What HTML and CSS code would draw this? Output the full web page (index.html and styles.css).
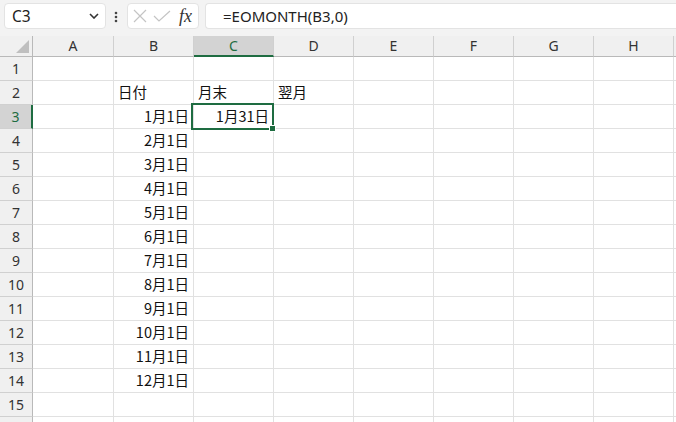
FILE: index.html
```html
<!doctype html>
<html lang="ja">
<head>
<meta charset="UTF-8">
<title>EOMONTH</title>
<link rel="stylesheet" href="styles.css">
</head>
<body>
	<div class="toolbar">
		<div class="namebox">
			<span class="name">C3</span>
			<svg class="chev" width="10" height="6" viewBox="0 0 10 6"><path d="M1 1 L5 5 L9 1" fill="none" stroke="#333" stroke-width="1.6"/></svg>
		</div>
		<svg class="dots" width="4" height="12" viewBox="0 0 4 12"><circle cx="2" cy="2" r="1.3" fill="#444"/><circle cx="2" cy="6" r="1.3" fill="#444"/><circle cx="2" cy="10" r="1.3" fill="#444"/></svg>
		<div class="btnbox">
			<svg width="14" height="14" viewBox="0 0 14 14"><path d="M1 1 L13 13 M13 1 L1 13" stroke="#c4c4c4" stroke-width="1.2"/></svg>
			<svg width="18" height="12" viewBox="0 0 18 12"><path d="M1 6 L6 11 L17 1" fill="none" stroke="#c4c4c4" stroke-width="1.2"/></svg>
			<span class="fx">fx</span>
		</div>
		<div class="formula">=EOMONTH(B3,0)</div>
	</div>

	<div class="sheetwrap">
	<div class="sheet">
		<div class="corner"><span class="tri"></span></div>
		<div class="ch">A</div><div class="ch">B</div><div class="ch sel">C</div><div class="ch">D</div><div class="ch">E</div><div class="ch">F</div><div class="ch">G</div><div class="ch">H</div><div class="ch"></div>

		<div class="rh">1</div><div class="c"></div><div class="c"></div><div class="c"></div><div class="c"></div><div class="c"></div><div class="c"></div><div class="c"></div><div class="c"></div><div class="c"></div>
		<div class="rh">2</div><div class="c"></div><div class="c">日付</div><div class="c">月末</div><div class="c">翌月</div><div class="c"></div><div class="c"></div><div class="c"></div><div class="c"></div><div class="c"></div>
		<div class="rh sel">3</div><div class="c"></div><div class="c r">1月1日</div><div class="c r active">1月31日<span class="frame"></span><span class="handle"></span></div><div class="c"></div><div class="c"></div><div class="c"></div><div class="c"></div><div class="c"></div><div class="c"></div>
		<div class="rh">4</div><div class="c"></div><div class="c r">2月1日</div><div class="c"></div><div class="c"></div><div class="c"></div><div class="c"></div><div class="c"></div><div class="c"></div><div class="c"></div>
		<div class="rh">5</div><div class="c"></div><div class="c r">3月1日</div><div class="c"></div><div class="c"></div><div class="c"></div><div class="c"></div><div class="c"></div><div class="c"></div><div class="c"></div>
		<div class="rh">6</div><div class="c"></div><div class="c r">4月1日</div><div class="c"></div><div class="c"></div><div class="c"></div><div class="c"></div><div class="c"></div><div class="c"></div><div class="c"></div>
		<div class="rh">7</div><div class="c"></div><div class="c r">5月1日</div><div class="c"></div><div class="c"></div><div class="c"></div><div class="c"></div><div class="c"></div><div class="c"></div><div class="c"></div>
		<div class="rh">8</div><div class="c"></div><div class="c r">6月1日</div><div class="c"></div><div class="c"></div><div class="c"></div><div class="c"></div><div class="c"></div><div class="c"></div><div class="c"></div>
		<div class="rh">9</div><div class="c"></div><div class="c r">7月1日</div><div class="c"></div><div class="c"></div><div class="c"></div><div class="c"></div><div class="c"></div><div class="c"></div><div class="c"></div>
		<div class="rh">10</div><div class="c"></div><div class="c r">8月1日</div><div class="c"></div><div class="c"></div><div class="c"></div><div class="c"></div><div class="c"></div><div class="c"></div><div class="c"></div>
		<div class="rh">11</div><div class="c"></div><div class="c r">9月1日</div><div class="c"></div><div class="c"></div><div class="c"></div><div class="c"></div><div class="c"></div><div class="c"></div><div class="c"></div>
		<div class="rh">12</div><div class="c"></div><div class="c r">10月1日</div><div class="c"></div><div class="c"></div><div class="c"></div><div class="c"></div><div class="c"></div><div class="c"></div><div class="c"></div>
		<div class="rh">13</div><div class="c"></div><div class="c r">11月1日</div><div class="c"></div><div class="c"></div><div class="c"></div><div class="c"></div><div class="c"></div><div class="c"></div><div class="c"></div>
		<div class="rh">14</div><div class="c"></div><div class="c r">12月1日</div><div class="c"></div><div class="c"></div><div class="c"></div><div class="c"></div><div class="c"></div><div class="c"></div><div class="c"></div>
		<div class="rh">15</div><div class="c"></div><div class="c"></div><div class="c"></div><div class="c"></div><div class="c"></div><div class="c"></div><div class="c"></div><div class="c"></div><div class="c"></div>
		<div class="rh"></div><div class="c"></div><div class="c"></div><div class="c"></div><div class="c"></div><div class="c"></div><div class="c"></div><div class="c"></div><div class="c"></div><div class="c"></div>
	</div>
	</div>
</body>
</html>
```

FILE: styles.css
```css
* {margin:0;padding:0;box-sizing:border-box;}
html,body{width:676px;height:422px;overflow:hidden;background:#fff;}
body{font-family:"Noto Sans","Noto Sans CJK JP",sans-serif;color:#222;}

.toolbar{height:36px;background:#f3f3f3;display:flex;align-items:flex-start;padding-top:3px;}
.namebox{width:102px;height:26px;margin-left:4px;background:#fff;border:1px solid #e3e3e3;border-radius:4px;display:flex;align-items:center;justify-content:space-between;padding:0 6px 0 7px;}
.namebox .name{font-size:15.5px;color:#222;}
.dots{margin:8px 0 0 8px;}
.btnbox{width:72px;height:26px;margin-left:9px;background:#fff;border:1px solid #e3e3e3;border-radius:4px;display:flex;align-items:center;padding-left:5px;gap:6px;}
.btnbox .fx{font-family:"Liberation Serif","DejaVu Serif",serif;font-style:italic;font-size:18px;color:#333;margin-left:2px;}
.formula{flex:1;height:26px;margin-left:6px;background:#fff;border:1px solid #e3e3e3;border-right:none;border-radius:4px 0 0 4px;font-size:15px;line-height:24px;padding-left:17px;color:#222;}

.sheetwrap{width:676px;overflow:hidden;}
.sheet{display:grid;grid-template-columns:33px 81px repeat(8,80px);grid-template-rows:21px repeat(16,24px);width:754px;}
.sheet > div{border-right:1px solid #e1e1e1;border-bottom:1px solid #e1e1e1;}
.corner{background:#f0f0f0;position:relative;}
.sheet > .corner{border-right:1px solid #b9b9b9;border-bottom:1px solid #b9b9b9;}
.tri{position:absolute;right:3px;bottom:3px;width:0;height:0;border-left:13px solid transparent;border-bottom:13px solid #bfbfbf;}
.sheet > .ch{background:#f0f0f0;border-right:1px solid #d0d0d0;border-bottom:1px solid #b9b9b9;text-align:center;font-size:14px;line-height:20px;color:#333;}
.sheet > .rh{background:#f0f0f0;border-right:1px solid #b9b9b9;border-bottom:1px solid #d0d0d0;text-align:center;font-size:14px;line-height:23px;color:#333;}
.sheet > .ch.sel{background:#d3d3d3;color:#1e6c41;border-bottom:2px solid #1e6c41;line-height:19px;}
.sheet > .rh.sel{background:#d3d3d3;color:#1e6c41;border-right:2px solid #1e6c41;}
.c{font-family:"Noto Sans CJK JP",sans-serif;font-size:14.5px;line-height:22px;padding:0 4px;color:#111;white-space:nowrap;}
.c.r{text-align:right;}
.active{position:relative;}
.frame{position:absolute;left:-3px;top:-2px;width:83px;height:27px;border:2px solid #1e6c41;}
.handle{position:absolute;right:-3px;bottom:-4px;width:7px;height:7px;background:#1e6c41;border:1px solid #fff;}
```
